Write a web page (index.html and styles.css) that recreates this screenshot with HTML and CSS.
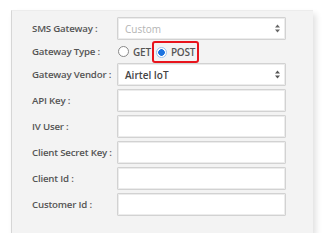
FILE: index.html
```html
<!DOCTYPE html>
<html lang="en">
<head>
    <meta charset="UTF-8">
    <title>SMS Gateway</title>
    <link rel="stylesheet" href="styles.css">
</head>
<body>
    <div class="panel">
        <form class="form-grid">
            <label class="lbl">SMS Gateway :</label>
            <div class="field select disabled">
                <span>Custom</span>
                <svg class="arrows" width="5" height="9" viewBox="0 0 5 9"><path d="M2.5 0.5L5 3.5H0Z M2.5 8.5L5 5.5H0Z" fill="#666"/></svg>
            </div>

            <label class="lbl">Gateway Type :</label>
            <div class="radios">
                <span class="radio"></span><span class="rtext">GET</span>
                <span class="highlight"><span class="radio checked"></span><span class="rtext">POST</span></span>
            </div>

            <label class="lbl">Gateway Vendor :</label>
            <div class="field select">
                <span>Airtel IoT</span>
                <svg class="arrows" width="5" height="9" viewBox="0 0 5 9"><path d="M2.5 0.5L5 3.5H0Z M2.5 8.5L5 5.5H0Z" fill="#555"/></svg>
            </div>

            <label class="lbl">API Key :</label>
            <div class="field"></div>

            <label class="lbl">IV User :</label>
            <div class="field"></div>

            <label class="lbl">Client Secret Key :</label>
            <div class="field"></div>

            <label class="lbl">Client Id :</label>
            <div class="field"></div>

            <label class="lbl">Customer Id :</label>
            <div class="field"></div>
        </form>
    </div>
</body>
</html>
```

FILE: styles.css
```css
/* page */
body {
    margin: 0;
    background: #fff;
    font-family: "Open Sans", "Noto Sans", sans-serif;
}
.panel {
    margin: 10px 0 0 11px;
    width: 302px;
    height: 223px;
    box-sizing: border-box;
    background: #f3f3f3;
    border-left: 1px solid #d6d6d6;
    border-top: 1px solid #ececec;
    box-shadow: 3px 4px 6px rgba(0, 0, 0, 0.12);
    padding: 6px 0 0 20px;
}
/* form */
.form-grid {
    display: grid;
    grid-template-columns: 85px 169px;
    row-gap: 3px;
    align-items: center;
}
.lbl {
    font-size: 9.7px;
    font-weight: 600;
    color: #555;
    white-space: nowrap;
    letter-spacing: -0.2px;
}
.field {
    height: 23px;
    box-sizing: border-box;
    background: #fff;
    border: 1px solid #d2d2d2;
    box-shadow: inset 0 0 0 1px #ececec;
    border-radius: 1px;
    display: flex;
    align-items: center;
    justify-content: space-between;
    padding: 0 5px 0 7px;
    font-size: 10px;
    font-weight: 600;
    color: #444;
}
.field.disabled {
    color: #b4b4b4;
    font-weight: 400;
}
.radios {
    height: 17px;
    display: flex;
    align-items: center;
    font-size: 10px;
    font-weight: 600;
    color: #555;
    letter-spacing: -0.2px;
}
.radio {
    width: 9px;
    height: 9px;
    border-radius: 50%;
    border: 1px solid #888;
    background: #fff;
    margin: 0 4px 0 1px;
}
.radio.checked {
    border-color: #9cc3ef;
    background: radial-gradient(circle, #1d74e0 0 3px, #fff 3.6px);
}
.rtext {
    margin-right: 1px;
}
.highlight {
    display: flex;
    align-items: center;
    box-sizing: border-box;
    height: 22px;
    margin: -2px 0 -3px 0;
    padding: 0 1px 0 1px;
    border: 2px solid #e8141c;
    border-radius: 3px;
}
```
